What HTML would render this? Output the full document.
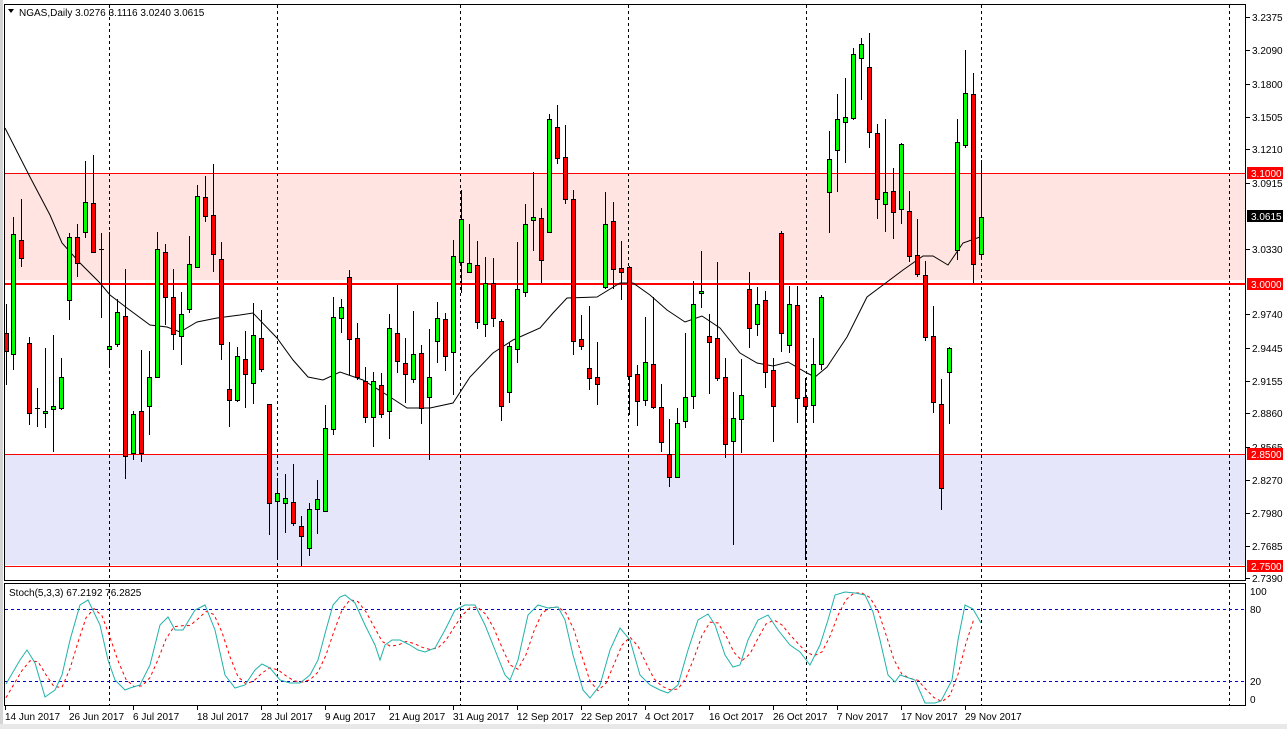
<!DOCTYPE html>
<html><head><meta charset="utf-8"><style>
html,body{margin:0;padding:0;background:#fff;width:1287px;height:729px;overflow:hidden}
svg{display:block;font-family:"Liberation Sans",sans-serif;font-size:10px}
</style></head><body>
<svg id="s" width="1287" height="729" xmlns="http://www.w3.org/2000/svg">
<rect x="0" y="0" width="1287" height="729" fill="#fff"/>
<rect x="0" y="0" width="3" height="729" fill="#d4d4d4"/>
<rect x="0" y="724" width="1287" height="5" fill="#e8e8e8"/>
<!-- bands -->
<rect x="5" y="174" width="1240" height="106" fill="#FFE4E1"/>
<rect x="5" y="455" width="1240" height="110" fill="#E6E6FA"/>
<g id="vd" stroke="#000" stroke-dasharray="3,3" stroke-width="1"></g>
<line x1="5" y1="173.5" x2="1245" y2="173.5" stroke="#f00"/>
<line x1="5" y1="284" x2="1245" y2="284" stroke="#f00" stroke-width="2"/>
<line x1="5" y1="454.5" x2="1245" y2="454.5" stroke="#f00"/>
<line x1="5" y1="566.5" x2="1245" y2="566.5" stroke="#f00"/>
<g id="ma"></g>
<g id="cd"></g>
<!-- frames -->
<rect x="4.5" y="4.5" width="1241" height="576" fill="none" stroke="#000"/>
<rect x="4.5" y="583.5" width="1241" height="122" fill="none" stroke="#000"/>
<line x1="5" y1="609.5" x2="1245" y2="609.5" stroke="#0000cc" stroke-dasharray="3,3"/>
<line x1="5" y1="681.5" x2="1245" y2="681.5" stroke="#0000cc" stroke-dasharray="3,3"/>
<g id="st"></g>
<g id="ax" fill="#000"></g>
<path d="M8 9 L14 9 L11 13 Z" fill="#000"/>
<text x="19" y="16" fill="#000">NGAS,Daily  3.0276 3.1116 3.0240 3.0615</text>
<text x="9" y="596" fill="#000">Stoch(5,3,3) 67.2192 76.2825</text>
</svg>
<script>
const NS="http://www.w3.org/2000/svg";
function el(p,t,a,txt){const e=document.createElementNS(NS,t);for(const k in a)e.setAttribute(k,a[k]);if(txt!=null)e.textContent=txt;p.appendChild(e);return e;}
const vd=document.getElementById('vd');
[109,277,460,628,806,981,1229].forEach(x=>{el(vd,'line',{x1:x+.5,y1:5,x2:x+.5,y2:580});el(vd,'line',{x1:x+.5,y1:584,x2:x+.5,y2:705});});
// candles: x, hi, top, bot, lo, g/r
const C=[
[6,304,333,351,385,'r'],[13,217,234,354,370,'g'],[21,199,240,258,267,'r'],[29,337,343,413,425,'r'],[37,388,408,409,427,'d'],
[45,348,411,413,428,'g'],[53,335,406,409,452,'g'],[61,358,377,408,410,'g'],[69,233,237,300,320,'g'],[77,224,237,263,277,'r'],
[85,161,202,232,238,'g'],[93,155,203,252,253,'r'],[101,233,249,249,318,'d'],[109,232,346,349,367,'g'],[117,299,312,344,347,'g'],
[125,269,316,456,479,'r'],[133,411,414,453,460,'g'],[141,350,411,453,462,'r'],[149,351,377,406,435,'g'],[157,232,249,377,378,'g'],
[165,244,252,297,325,'r'],[173,269,297,334,350,'r'],[181,292,314,336,365,'g'],[189,236,264,309,313,'g'],[197,185,196,267,268,'g'],
[205,176,197,216,222,'r'],[213,164,215,254,272,'r'],[221,242,259,344,360,'r'],[229,342,389,400,427,'r'],[237,347,356,400,402,'g'],
[245,331,359,374,408,'r'],[253,303,335,383,404,'g'],[261,310,338,369,372,'r'],[269,404,404,503,535,'r'],[277,478,493,501,558,'g'],
[285,474,498,503,533,'g'],[293,464,502,523,526,'r'],[301,516,526,536,566,'r'],[309,503,509,548,556,'g'],[317,480,499,509,534,'g'],
[325,405,428,511,511,'g'],[333,297,317,429,435,'g'],[341,299,307,318,333,'g'],[349,270,277,339,375,'r'],[357,323,338,377,380,'r'],
[365,367,381,417,423,'r'],[373,372,381,417,447,'g'],[381,373,385,414,418,'r'],[389,314,328,411,439,'g'],[397,285,333,361,373,'r'],
[405,338,363,374,403,'r'],[413,311,354,379,383,'g'],[421,345,353,408,424,'r'],[429,329,377,397,460,'g'],[437,302,318,341,363,'g'],
[445,313,319,356,371,'r'],[453,240,256,352,395,'g'],[461,190,219,262,293,'g'],[469,224,263,272,272,'g'],[477,241,265,322,329,'r'],
[485,257,283,324,337,'g'],[493,258,283,318,327,'r'],[501,319,321,406,421,'r'],[509,343,346,392,403,'g'],[517,242,289,349,363,'g'],
[525,204,224,292,297,'g'],[533,172,217,220,251,'g'],[541,208,218,260,283,'r'],[549,114,119,232,232,'g'],[557,105,127,158,164,'r'],
[565,125,157,199,204,'r'],[573,190,199,341,355,'r'],[581,315,339,346,350,'r'],[589,306,368,378,390,'r'],[597,342,377,384,405,'r'],
[605,192,224,287,289,'g'],[613,202,221,269,289,'r'],[621,241,268,272,300,'r'],[629,266,267,376,415,'r'],[637,365,374,401,426,'r'],
[645,317,362,400,406,'g'],[653,297,364,407,409,'r'],[661,384,407,442,452,'r'],[669,419,454,477,487,'r'],[677,408,423,477,477,'g'],
[685,333,397,421,428,'g'],[693,281,304,396,409,'g'],[701,251,291,293,308,'g'],[709,314,336,342,394,'r'],[717,262,338,378,381,'r'],
[725,358,377,444,458,'r'],[733,392,418,441,545,'g'],[741,359,395,419,453,'g'],[749,272,289,328,348,'r'],[757,287,304,324,336,'g'],
[765,291,300,372,388,'r'],[773,358,370,406,442,'r'],[781,231,233,333,352,'r'],[789,286,304,345,353,'g'],[797,286,305,398,423,'r'],
[805,378,397,406,560,'r'],[813,338,364,405,423,'g'],[821,295,297,364,370,'g'],[829,131,159,192,233,'g'],[837,94,119,150,192,'g'],
[845,78,117,122,163,'g'],[853,48,54,118,120,'g'],[861,38,44,58,100,'g'],[869,33,67,132,148,'r'],[877,124,133,199,219,'r'],
[885,119,192,204,232,'g'],[893,168,191,212,239,'r'],[901,143,144,209,224,'g'],[909,191,211,256,262,'r'],[917,219,255,274,277,'r'],
[925,261,275,337,341,'r'],[933,306,336,402,413,'r'],[941,379,404,488,510,'r'],[949,347,348,372,424,'g'],[957,119,142,250,260,'g'],
[965,50,93,145,148,'g'],[973,73,94,264,283,'r'],[981,160,217,254,258,'g']];
const cd=document.getElementById('cd');
C.forEach(c=>{const [x,h,t,b,l,k]=c;
el(cd,'line',{x1:x+.5,y1:h,x2:x+.5,y2:l,stroke:'#000'});
if(k==='d'){el(cd,'line',{x1:x-2,y1:t+.5,x2:x+3,y2:t+.5,stroke:'#000'});}
else el(cd,'rect',{x:x-1.5,y:t+.5,width:4,height:Math.max(b-t,1),fill:k==='g'?'#00ff00':'#ff0000',stroke:'#000'});});
const MA=[[5,128],[30,177],[50,215],[62,243],[80,263],[100,283],[110,295],[127,308],[150,325],[167,327],[180,332],[197,322],[217,318],[240,315],[253,313],[277,338],[293,360],[308,377],[323,380],[340,372],[363,380],[387,395],[407,408],[430,408],[453,403],[470,377],[493,353],[513,340],[540,328],[553,313],[567,298],[597,297],[620,283],[633,283],[650,295],[667,310],[685,322],[702,316],[720,328],[740,353],[757,363],[773,366],[788,362],[807,373],[815,377],[827,367],[847,337],[867,297],[887,282],[903,270],[923,256],[933,256],[948,265],[963,243],[980,237]];
el(document.getElementById('ma'),'polyline',{points:MA.map(p=>p.join(',')).join(' '),fill:'none',stroke:'#000','stroke-width':1});
const S=[[6,684],[20,660],[27,650],[35,663],[45,697],[55,690],[62,675],[70,640],[80,605],[88,600],[100,625],[108,660],[115,680],[125,690],[130,688],[140,685],[150,665],[160,625],[168,617],[175,630],[183,630],[195,610],[205,605],[215,630],[225,675],[235,688],[245,685],[255,670],[262,664],[270,668],[280,680],[290,683],[300,683],[310,675],[318,660],[326,630],[333,605],[340,597],[345,595],[355,603],[365,625],[375,645],[380,660],[385,645],[392,640],[400,640],[410,645],[418,650],[425,652],[435,648],[445,630],[455,610],[465,605],[475,605],[485,625],[495,650],[505,675],[510,680],[518,660],[528,615],[538,605],[548,608],[558,607],[565,620],[573,655],[583,690],[590,698],[600,685],[610,650],[620,628],[630,640],[640,675],[650,685],[660,690],[668,693],[678,685],[688,650],[698,620],[708,614],[715,625],[725,655],[733,667],[740,665],[748,640],[758,620],[768,615],[778,630],[790,645],[800,652],[810,665],[820,645],[828,620],[835,595],[845,592],[855,593],[865,595],[873,612],[880,640],[888,675],[895,682],[900,675],[915,680],[925,703],[935,703],[941,701],[952,680],[958,640],[965,605],[973,609],[981,623]];
function at(x){for(let i=1;i<S.length;i++){if(S[i][0]>=x){const a=S[i-1],b=S[i];return a[1]+(b[1]-a[1])*(x-a[0])/(b[0]-a[0]);}}return S[S.length-1][1];}
const sig=[];for(let x=6;x<=981;x+=8){const v=(at(x)+at(x-8)+at(x-16))/3;sig.push([x,v.toFixed(1)]);}
const st=document.getElementById('st');
el(st,'polyline',{points:sig.map(p=>p.join(',')).join(' '),fill:'none',stroke:'#ff0000','stroke-dasharray':'3,3'});
el(st,'polyline',{points:S.map(p=>p.join(',')).join(' '),fill:'none',stroke:'#20b2aa'});
const ax=document.getElementById('ax');
[['3.2375',17],['3.2090',50],['3.1800',84],['3.1505',117],['3.1210',149],['3.0915',183],['3.0330',249],['2.9740',314],['2.9445',348],['2.9155',381],['2.8860',413],['2.8565',447],['2.8270',480],['2.7980',513],['2.7685',546],['2.7390',578]].forEach(([t,y])=>{el(ax,'line',{x1:1246,y1:y+.5,x2:1250,y2:y+.5,stroke:'#000'});el(ax,'text',{x:1252,y:y+4},t);});
[['3.1000',173,'#f00','#fff'],['3.0615',216,'#000','#fff'],['3.0000',284,'#f00','#fff'],['2.8500',454,'#f00','#fff'],['2.7500',566,'#f00','#fff']].forEach(([t,y,bg,fg])=>{el(ax,'rect',{x:1247,y:y-6,width:36,height:12,fill:bg});el(ax,'text',{x:1251,y:y+4,fill:fg},t);});
[['100',591],['80',609],['20',681],['0',699]].forEach(([t,y])=>{el(ax,'text',{x:1250,y:y+4},t);});
[['14 Jun 2017',5],['26 Jun 2017',69],['6 Jul 2017',133],['18 Jul 2017',197],['28 Jul 2017',261],['9 Aug 2017',325],['21 Aug 2017',389],['31 Aug 2017',453],['12 Sep 2017',517],['22 Sep 2017',581],['4 Oct 2017',645],['16 Oct 2017',709],['26 Oct 2017',773],['7 Nov 2017',837],['17 Nov 2017',901],['29 Nov 2017',965]].forEach(([t,x])=>{el(ax,'line',{x1:x+.5,y1:706,x2:x+.5,y2:710,stroke:'#000'});el(ax,'text',{x:x,y:720},t);});
</script>
</body></html>
